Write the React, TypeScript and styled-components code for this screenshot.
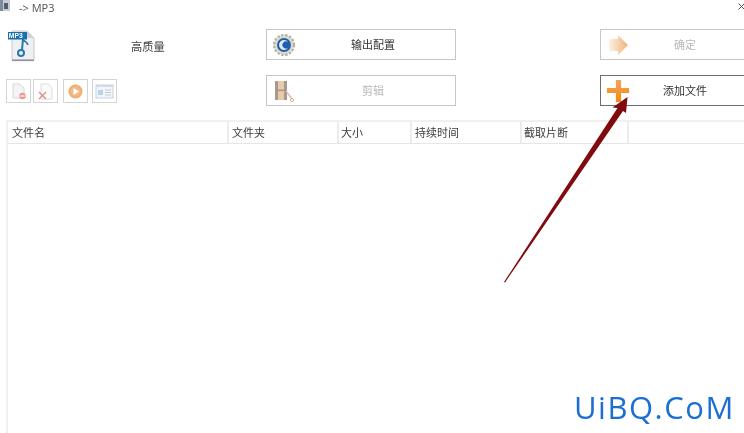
import React from "react";
import styled, { createGlobalStyle } from "styled-components";

const Global = createGlobalStyle`
  html, body { margin: 0; padding: 0; background: #fff; }
  body { font-family: "Noto Sans CJK SC", "Liberation Sans", sans-serif; }
`;

const Page = styled.div`
  position: relative;
  width: 744px;
  height: 433px;
  overflow: hidden;
  background: #fff;
  color: #333;
  filter: blur(0.3px);
`;

const TitleBar = styled.div`
  height: 13px;
  display: flex;
  align-items: center;
  gap: 9px;
  overflow: hidden;
`;

const TitleIcon = styled.svg`
  width: 10px;
  height: 13px;
  flex: none;
`;

const TitleText = styled.span`
  flex: 1;
  padding-top: 1px;
  font-family: "Open Sans", "Liberation Sans", sans-serif;
  font-size: 11px;
  line-height: 13px;
  color: #555;
`;

const CloseGlyph = styled.svg`
  width: 7px;
  height: 7px;
  flex: none;
  margin-right: -1px;
`;

const Controls = styled.div`
  display: grid;
  grid-template-columns: 260px 190px 1fr;
  grid-template-rows: 31px 31px;
  row-gap: 15px;
  padding: 16px 0 0 6px;
`;

const FormatCell = styled.div`
  display: flex;
  align-items: center;
`;

const Quality = styled.span`
  margin-left: 95px;
  margin-top: 2px;
  font-size: 11.3px;
  line-height: 16px;
  color: #444;
`;

const SmallTools = styled.div`
  display: flex;
  align-items: flex-start;
  height: 31px;
  padding-top: 4px;
  box-sizing: border-box;
`;

const SmallTool = styled.div<{ $gap: number }>`
  width: 25px;
  height: 24px;
  box-sizing: border-box;
  margin-right: ${(p) => p.$gap}px;
  border: 1px solid #d4d4d4;
  display: flex;
  align-items: center;
  justify-content: center;
  background: #fff;
`;

const ActionButton = styled.div<{ $active?: boolean; $muted?: boolean; $right?: boolean }>`
  box-sizing: border-box;
  height: 31px;
  width: ${(p) => (p.$right ? "150px" : "190px")};
  margin-left: ${(p) => (p.$right ? "144px" : "0")};
  border: 1px solid ${(p) => (p.$active ? "#6e6e6e" : "#c6c6c6")};
  background: #fff;
  display: grid;
  grid-template-columns: 38px 1fr;
  align-items: center;
  font-size: 11px;
  color: ${(p) => (p.$muted ? "#b9b9b9" : "#333")};
`;

const ButtonLabel = styled.span<{ $shift: number }>`
  text-align: center;
  padding-right: ${(p) => p.$shift}px;
  padding-bottom: 2px;
  line-height: 16px;
`;

const IconSlot = styled.svg`
  width: 24px;
  height: 24px;
  margin-left: 5px;
`;

const SmallIcon = styled.svg`
  width: 19px;
  height: 19px;
`;

const FileIcon = styled.svg`
  width: 28px;
  height: 32px;
  margin-left: 2px;
  margin-top: 3px;
`;

const Table = styled.div`
  margin: 14px 0 0 6px;
  border-left: 2px solid #f0f0f0;
  border-top: 2px solid #f0f0f0;
  height: 320px;
`;

const HeaderRow = styled.div`
  display: grid;
  grid-template-columns: 221px 110px 73px 110px 107px 1fr;
  height: 21px;
  border-bottom: 1px solid #e6e6e6;
`;

const HeaderCell = styled.div<{ $pad: number }>`
  border-right: 2px solid #ececec;
  padding-left: ${(p) => p.$pad}px;
  font-size: 11px;
  line-height: 20px;
  color: #3c3c3c;
  &:last-child { border-right: 0; }
`;

const ArrowOverlay = styled.svg`
  position: absolute;
  left: 0;
  top: 0;
  width: 744px;
  height: 433px;
  pointer-events: none;
`;

const Watermark = styled.div`
  position: absolute;
  left: 574px;
  top: 386px;
  font-family: "Open Sans", "Liberation Sans", sans-serif;
  font-size: 31px;
  letter-spacing: 1.5px;
  line-height: 42px;
  color: #1b6fd2;
  white-space: nowrap;
`;

const columns = [
  { label: "文件名", pad: 4 },
  { label: "文件夹", pad: 3 },
  { label: "大小", pad: 2 },
  { label: "持续时间", pad: 3 },
  { label: "截取片断", pad: 2 },
  { label: "", pad: 0 },
];

export default function App() {
  return (
    <Page>
      <Global />
      <TitleBar>
        <TitleIcon viewBox="0 0 10 13">
          <rect x="0" y="0" width="10" height="11" fill="#c5ccd3" />
          <rect x="0" y="0" width="3" height="11" fill="#7f8b97" />
          <rect x="4" y="3" width="4" height="6" fill="#4f5f70" />
        </TitleIcon>
        <TitleText>-&gt; MP3</TitleText>
        <CloseGlyph viewBox="0 0 7 7">
          <path d="M0.5 0.5 L6.5 6.5 M6.5 0.5 L0.5 6.5" stroke="#555" strokeWidth="1" />
        </CloseGlyph>
      </TitleBar>

      <Controls>
        <FormatCell>
          <FileIcon viewBox="0 0 28 32">
            <path d="M4 1 H19 L26 8 V29 Q26 30 25 30 H5 Q4 30 4 29 Z" fill="#eef0f3" stroke="#b8bec6" strokeWidth="0.8" />
            <path d="M19 1 V8 H26 Z" fill="#cfd4da" />
            <rect x="4" y="29.5" width="22" height="1.6" fill="#8f949a" />
            <path d="M15 9 L14 20" stroke="#2b78ab" strokeWidth="2" fill="none" />
            <path d="M15 10 Q19 12 20 15" stroke="#2b78ab" strokeWidth="1.6" fill="none" />
            <circle cx="13" cy="23" r="3" fill="none" stroke="#2b78ab" strokeWidth="2" />
            <rect x="0" y="2" width="19" height="7.5" fill="#1a6fad" />
            <text x="0.8" y="8.2" fontFamily="Liberation Sans" fontWeight="700" fontSize="6.8" fill="#fff">MP3</text>
          </FileIcon>
          <Quality>高质量</Quality>
        </FormatCell>
        <ActionButton>
          <IconSlot viewBox="0 0 24 24">
            <circle cx="12" cy="12" r="10" fill="#dedcd0" stroke="#b3b2a4" strokeWidth="2.2" strokeDasharray="2.4 1.6" />
            <circle cx="12" cy="12" r="7" fill="#1f5fae" />
            <path d="M16 9 A5 5 0 1 0 16 15 A3.6 3.6 0 1 1 16 9 Z" fill="#dfeaf6" />
          </IconSlot>
          <ButtonLabel $shift={14}>输出配置</ButtonLabel>
        </ActionButton>
        <ActionButton $muted $right>
          <IconSlot viewBox="0 0 24 24">
            <defs>
              <linearGradient id="okFill" x1="0" x2="1" y1="0" y2="0">
                <stop offset="0" stopColor="#fdf2e4" />
                <stop offset="1" stopColor="#f0b27a" />
              </linearGradient>
            </defs>
            <path d="M3 6 H12 V2 L22 12 L12 22 V18 H3 Z" fill="url(#okFill)" />
          </IconSlot>
          <ButtonLabel $shift={18}>确定</ButtonLabel>
        </ActionButton>

        <SmallTools>
          <SmallTool $gap={2}>
            <SmallIcon viewBox="0 0 19 19">
              <path d="M4 2 H11 L15 6 V16 H4 Z" fill="#f4f4f4" stroke="#d8d8d8" />
              <circle cx="13.5" cy="14" r="3.2" fill="#e79a94" />
              <rect x="11.5" y="13.4" width="4" height="1.2" fill="#fff" />
            </SmallIcon>
          </SmallTool>
          <SmallTool $gap={5}>
            <SmallIcon viewBox="0 0 19 19">
              <path d="M5 2 H12 L16 6 V17 H5 Z" fill="#fafafa" stroke="#dddddd" />
              <path d="M3 10 L10 17 M10 10 L3 17" stroke="#e28a84" strokeWidth="1.3" />
            </SmallIcon>
          </SmallTool>
          <SmallTool $gap={4}>
            <SmallIcon viewBox="0 0 19 19">
              <circle cx="9.5" cy="9.5" r="7" fill="#f0ad72" />
              <circle cx="9.5" cy="9.5" r="5" fill="#f3bb88" />
              <path d="M7.5 6 L13 9.5 L7.5 13 Z" fill="#fff" />
            </SmallIcon>
          </SmallTool>
          <SmallTool $gap={0}>
            <SmallIcon viewBox="0 0 19 19">
              <rect x="1" y="3" width="17" height="13" fill="#f2f6fa" stroke="#c8d2dc" />
              <rect x="1" y="3" width="17" height="2" fill="#cfdbe6" />
              <rect x="3" y="8" width="5" height="5" fill="#b6d3ec" />
              <path d="M10 8 H16 M10 10.5 H16 M10 13 H16" stroke="#c3ccd4" />
            </SmallIcon>
          </SmallTool>
        </SmallTools>
        <ActionButton $muted>
          <IconSlot viewBox="0 0 24 24">
            <rect x="3" y="2" width="12" height="19" fill="#e9c9a8" />
            <rect x="3" y="2" width="3" height="19" fill="#a59a90" />
            <rect x="12" y="2" width="3" height="19" fill="#a59a90" />
            <rect x="6" y="10.5" width="6" height="1.6" fill="#a59a90" />
            <path d="M14 12 L20 20" stroke="#e7b6a8" strokeWidth="1.3" />
            <circle cx="20" cy="21" r="1.6" fill="none" stroke="#e7a79a" />
          </IconSlot>
          <ButtonLabel $shift={14}>剪辑</ButtonLabel>
        </ActionButton>
        <ActionButton $active $right>
          <IconSlot viewBox="0 0 24 24">
            <defs>
              <linearGradient id="plusV" x1="0" x2="0" y1="0" y2="1">
                <stop offset="0" stopColor="#f3a25c" />
                <stop offset="1" stopColor="#f68a12" />
              </linearGradient>
            </defs>
            <path d="M10.5 1.5 H14.5 V9.5 H22.5 V13.5 H14.5 V22.5 H10.5 V13.5 H1.5 V9.5 H10.5 Z" fill="url(#plusV)" stroke="url(#plusV)" strokeWidth="1.2" strokeLinejoin="round" />
          </IconSlot>
          <ButtonLabel $shift={18}>添加文件</ButtonLabel>
        </ActionButton>
      </Controls>

      <Table>
        <HeaderRow>
          {columns.map((c, i) => (
            <HeaderCell key={i} $pad={c.pad}>{c.label}</HeaderCell>
          ))}
        </HeaderRow>
      </Table>

      <ArrowOverlay viewBox="0 0 744 433">
        <path
          d="M504 282 L617.5 108 L612.5 107.5 L627.5 97 L626 113 L623 111 L505 282.5 Z"
          fill="#800a0d"
        />
      </ArrowOverlay>
      <Watermark>UiBQ.CoM</Watermark>
    </Page>
  );
}
